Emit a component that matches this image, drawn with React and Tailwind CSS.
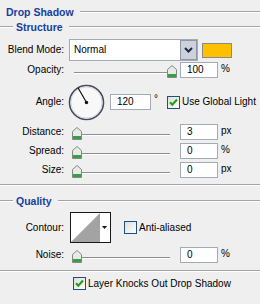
import React from "react";

function Etch({ className = "" }) {
    return <div className={"h-0 border-t border-t-[#a4a4a4] border-b border-b-white " + className} />;
}

function GroupTitle({ children }) {
    return (
        <div className="flex items-center h-[14px]">
            <Etch className="w-[13px]" />
            <span className="pl-[3px] pr-[6px] font-bold text-[10.5px] text-[#163f9f] leading-none">{children}</span>
            <Etch className="flex-1" />
        </div>
    );
}

function Label({ children }) {
    return <div className="w-[64px] text-right leading-none">{children}</div>;
}

function Thumb() {
    return (
        <svg width="10" height="13" viewBox="0 0 10 13">
            <path d="M0.5 4.5 L5 0.5 L9.5 4.5 V12.5 H0.5 Z" fill="#e6ebe6" stroke="#7f8b82" />
            <rect x="1" y="9" width="8" height="3" fill="#3a9e48" />
        </svg>
    );
}

function NumBox({ value, w = "w-[38px]" }) {
    return (
        <div className={"h-[16px] bg-white border border-[#a3abb6] flex items-center pl-[6px] leading-none " + w}>
            {value}
        </div>
    );
}

function SliderRow({ label, value, unit, thumbLeft, className = "" }) {
    return (
        <div className={"flex items-center h-[16px] " + className}>
            <Label>{label}</Label>
            <div className="relative w-[106px] h-full ml-[8px]">
                <div className="absolute left-[2px] w-[96px] top-[10px] h-0 border-t border-t-[#8f8f8f] border-b border-b-white" />
                <div className={"absolute top-[3px] " + thumbLeft}>
                    <Thumb />
                </div>
            </div>
            <div className="ml-[2px]">
                <NumBox value={value} />
            </div>
            <span className="ml-[3px] leading-none -mt-[2px]">{unit}</span>
        </div>
    );
}

function Check({ checked }) {
    return (
        <svg width="13" height="13" viewBox="0 0 13 13" className="shrink-0">
            <defs>
                <linearGradient id="cb" x1="0" y1="0" x2="1" y2="1">
                    <stop offset="0" stopColor="#dcdcd6" />
                    <stop offset="1" stopColor="#ffffff" />
                </linearGradient>
            </defs>
            <rect x="0.5" y="0.5" width="12" height="12" fill="url(#cb)" stroke="#1f4f80" />
            {checked && <path d="M3 6.2 L5.3 8.7 L10 3.6" fill="none" stroke="#21a121" strokeWidth="2.2" />}
        </svg>
    );
}

export default function App() {
    return (
        <div className="w-[260px] h-[304px] bg-[#efefef] text-black text-[10px] font-['Liberation_Sans',Arial,sans-serif] overflow-hidden">
            <div className="flex items-center h-[24px]">
                <span className="pl-[6px] pr-[6px] font-bold text-[10.5px] text-[#163f9f] leading-none">Drop Shadow</span>
                <Etch className="flex-1" />
            </div>

            <div className="-mt-[4px]">
                <GroupTitle>Structure</GroupTitle>
            </div>

            <div className="flex items-center h-[22px] mt-[5px]">
                <Label>Blend Mode:</Label>
                <div className="ml-[5px] w-[129px] h-[22px] bg-white border border-[#a3abb6] flex items-center">
                    <span className="pl-[4px] flex-1 leading-none">Normal</span>
                    <div className="w-[17px] h-[20px] bg-[#cdd1da] border border-[#8e97aa] flex items-center justify-center">
                        <svg width="9" height="6" viewBox="0 0 9 6">
                            <path d="M1 1 L4.5 4.5 L8 1" fill="none" stroke="#1c2740" strokeWidth="2" />
                        </svg>
                    </div>
                </div>
                <div className="ml-[4px] w-[30px] h-[15px] bg-[#ffc000] border border-[#8a8a8a]" />
            </div>

            <SliderRow className="mt-[1px]" label="Opacity:" value="100" unit="%" thumbLeft="left-[95px]" />

            <div className="flex items-center h-[36px] mt-[6px]">
                <Label>Angle:</Label>
                <svg width="37" height="37" viewBox="0 0 37 37" className="ml-[4px] shrink-0">
                    <circle cx="18.5" cy="18.5" r="17" fill="#f8f8f8" stroke="#424a5c" strokeWidth="1.6" />
                    <circle cx="18.5" cy="18.5" r="15.6" fill="none" stroke="#d4d7de" strokeWidth="1" />
                    <line x1="18.5" y1="18.5" x2="10" y2="3.8" stroke="#111" strokeWidth="1.2" />
                    <circle cx="18.5" cy="18.5" r="1.7" fill="#111" />
                </svg>
                <div className="ml-[5px]">
                    <NumBox value="120" w="w-[41px]" />
                </div>
                <span className="ml-[3px] leading-none -mt-[6px]">°</span>
                <div className="ml-[9px] flex items-center">
                    <Check checked />
                    <span className="ml-[2px] leading-none">Use Global Light</span>
                </div>
            </div>

            <SliderRow className="mt-[4px]" label="Distance:" value="3" unit="px" thumbLeft="left-0" />
            <SliderRow className="mt-[3px]" label="Spread:" value="0" unit="%" thumbLeft="left-0" />
            <SliderRow className="mt-[3px]" label="Size:" value="0" unit="px" thumbLeft="left-0" />

            <Etch className="mt-[6px]" />

            <div className="mt-[8px]">
                <GroupTitle>Quality</GroupTitle>
            </div>

            <div className="flex items-center h-[31px] mt-[4px]">
                <Label>Contour:</Label>
                <svg width="41" height="31" viewBox="0 0 41 31" className="ml-[6px] shrink-0">
                    <rect x="0.5" y="0.5" width="40" height="30" fill="#ffffff" stroke="#1a1a1a" />
                    <polygon points="1,30 30,1 30,30" fill="#a3a3a3" />
                    <polygon points="32,14 37,14 34.5,17" fill="#111" />
                </svg>
                <div className="ml-[13px] flex items-center">
                    <Check />
                    <span className="ml-[2px] leading-none">Anti-aliased</span>
                </div>
            </div>

            <SliderRow className="mt-[4px]" label="Noise:" value="0" unit="%" thumbLeft="left-0" />

            <Etch className="mt-[7px]" />

            <div className="flex items-center h-[13px] mt-[5px] pl-[73px]">
                <Check checked />
                <span className="ml-[2px] leading-none">Layer Knocks Out Drop Shadow</span>
            </div>
        </div>
    );
}
